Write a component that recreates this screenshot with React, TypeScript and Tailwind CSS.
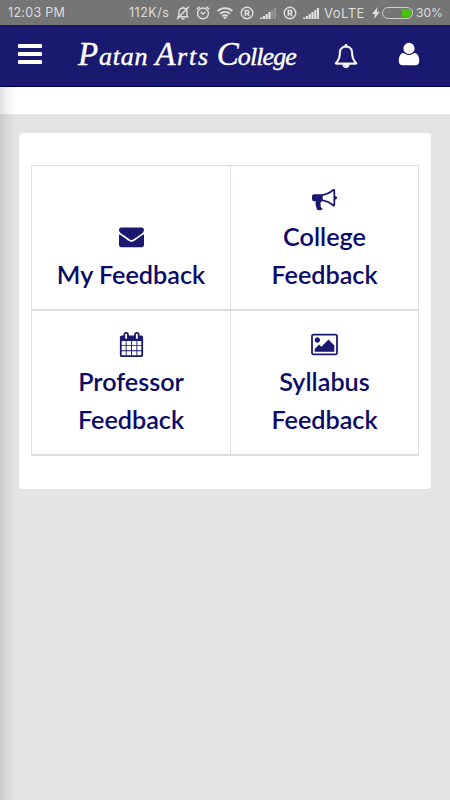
import type { ReactNode } from "react";

type IconProps = {
  path: string;
  viewBox?: string;
  className?: string;
};

function Icon({ path, viewBox = "0 0 1792 1792", className }: IconProps) {
  return (
    <svg viewBox={viewBox} fill="currentColor" className={className}>
      <path d={path} />
    </svg>
  );
}

const bars =
  "M1664 1344v128q0 26-19 45t-45 19h-1408q-26 0-45-19t-19-45v-128q0-26 19-45t45-19h1408q26 0 45 19t19 45zm0-512v128q0 26-19 45t-45 19h-1408q-26 0-45-19t-19-45v-128q0-26 19-45t45-19h1408q26 0 45 19t19 45zm0-512v128q0 26-19 45t-45 19h-1408q-26 0-45-19t-19-45v-128q0-26 19-45t45-19h1408q26 0 45 19t19 45z";
const bell =
  "M912 1696q0-16-16-16-59 0-101.5-42.5t-42.5-101.5q0-16-16-16t-16 16q0 73 51.5 124.5t124.5 51.5q16 0 16-16zm-666-288h1300q-266-300-266-832 0-51-24-105t-69-103-121.5-80.5-169.5-31.5-169.5 31.5-121.5 80.5-69 103-24 105q0 532-266 832zm1482 0q0 52-38 90t-90 38h-448q0 106-75 181t-181 75-181-75-75-181h-448q-52 0-90-38t-38-90q50-42 91-88t85-119.5 74.5-158.5 50-206 19.5-260q0-152 117-282.5t307-158.5q-8-19-8-39 0-40 28-68t68-28 68 28 28 68q0 20-8 39 190 28 307 158.5t117 282.5q0 139 19.5 260t50 206 74.5 158.5 85 119.5 91 88z";
const user =
  "M1600 1405q0 120-73 189.5t-194 69.5h-874q-121 0-194-69.5t-73-189.5q0-53 3.5-103.5t14-109 26.5-108.5 43-97.5 62-81 85.5-53.5 111.5-20q9 0 42 21.5t74.5 48 108 48 133.5 21.5 133.5-21.5 108-48 74.5-48 42-21.5q61 0 111.5 20t85.5 53.5 62 81 43 97.5 26.5 108.5 14 109 3.5 103.5zm-320-893q0 159-112.5 271.5t-271.5 112.5-271.5-112.5-112.5-271.5 112.5-271.5 271.5-112.5 271.5 112.5 112.5 271.5z";
const envelope =
  "M1792 710v794q0 66-47 113t-113 47h-1472q-66 0-113-47t-47-113v-794q44 49 101 87 362 246 497 345 57 42 92.5 65.5t94.5 48 110 24.5h2q51 0 110-24.5t94.5-48 92.5-65.5q170-123 498-345 57-39 100-87zm0-294q0 79-49 151t-122 123q-376 261-468 325-10 7-42.5 31t-54 38.5-52 32.5-57.5 27-50 9h-2q-23 0-50-9t-57.5-27-52-32.5-54-38.5-42.5-31q-91-64-262-182.5t-205-142.5q-62-42-117-115.5t-55-136.5q0-78 41.5-130t118.5-52h1472q65 0 112.5 47t47.5 113z";
const bullhorn =
  "M1664 640q53 0 90.5 37.5t37.5 90.5-37.5 90.5-90.5 37.5v384q0 52-38 90t-90 38q-417-347-812-380-58 19-91 66t-31 100.5 40 92.5q-20 33-23 65.5t6 58 33.5 55 48 50 61.5 50.5q-29 58-111.5 83t-168.5 11.5-132-55.5q-7-23-29.5-87.5t-32-94.5-23-89-15-101 3.5-98.5 22-110.5h-122q-66 0-113-47t-47-113v-192q0-66 47-113t113-47h480q435 0 896-384 52 0 90 38t38 90v384zm-128 604v-954q-394 302-768 343v270q377 42 768 341z";
const calendar =
  "M192 1664h288v-288h-288v288zm352 0h320v-288h-320v288zm-352-352h288v-320h-288v320zm352 0h320v-320h-320v320zm-352-384h288v-288h-288v288zm736 736h320v-288h-320v288zm-384-736h320v-288h-320v288zm768 736h288v-288h-288v288zm-384-352h320v-320h-320v320zm-352-864v-288q0-13-9.5-22.5t-22.5-9.5h-64q-13 0-22.5 9.5t-9.5 22.5v288q0 13 9.5 22.5t22.5 9.5h64q13 0 22.5-9.5t9.5-22.5zm736 864h288v-320h-288v320zm-384-384h320v-288h-320v288zm384 0h288v-288h-288v288zm32-480v-288q0-13-9.5-22.5t-22.5-9.5h-64q-13 0-22.5 9.5t-9.5 22.5v288q0 13 9.5 22.5t22.5 9.5h64q13 0 22.5-9.5t9.5-22.5zm384-64v1280q0 52-38 90t-90 38h-1408q-52 0-90-38t-38-90v-1280q0-52 38-90t90-38h128v-96q0-66 47-113t113-47h64q66 0 113 47t47 113v96h384v-96q0-66 47-113t113-47h64q66 0 113 47t47 113v96h128q52 0 90 38t38 90z";
const picture =
  "M576 576q0 80-56 136t-136 56-136-56-56-136 56-136 136-56 136 56 56 136zm1024 384v448h-1408v-192l320-320 160 160 512-512zm96-704h-1600q-13 0-22.5 9.5t-9.5 22.5v1216q0 13 9.5 22.5t22.5 9.5h1600q13 0 22.5-9.5t9.5-22.5v-1216q0-13-9.5-22.5t-22.5-9.5zm160 32v1216q0 66-47 113t-113 47h-1600q-66 0-113-47t-47-113v-1216q0-66 47-113t113-47h1600q66 0 113 47t47 113z";

function Registered() {
  return (
    <svg viewBox="0 0 14 14" fill="none" stroke="currentColor" className="size-3.5 shrink-0">
      <circle cx="7" cy="7" r="5.8" strokeWidth="1.4" />
      <path d="M5.3 10V4.4h2.1a1.5 1.5 0 0 1 0 3H5.3M7.3 7.5 9 10" strokeWidth="1.5" />
    </svg>
  );
}

function Signal({ weak = false }: { weak?: boolean }) {
  return (
    <svg viewBox="0 0 16 11" fill="currentColor" className="h-[11px] w-4 shrink-0">
      <path d="M0 11V9.5h2.2V11zM2.8 11V8H5v3zM5.6 11V6h2.2v5z" />
      <path d="M8.4 11V4h2.2v7z" />
      <path d="M11.2 11V2h2v9zM13.8 11V0H16v11z" opacity={weak ? 0.3 : 1} />
    </svg>
  );
}

function StatusBar() {
  return (
    <div className="flex h-[25px] items-center bg-[#757575] pl-2 font-['Inter',sans-serif] text-[12px] text-[#dedede]">
      <span className="w-[121px] pt-0.5 text-[12.5px] tracking-[0.3px] whitespace-nowrap">12:03 PM</span>
      <span className="w-[47px] pt-0.5 text-[12.5px] tracking-[0.5px] whitespace-nowrap">112K/s</span>
      <svg viewBox="0 0 14 14" fill="none" stroke="currentColor" strokeWidth="1.4" className="size-3.5 shrink-0">
        <path d="M1.5 10.8h11M3 10.5V5.6C3 3.6 4.6 2 7 2s4 1.6 4 3.6v4.9M7 .5V2M5.5 12.7h3M12.8.8 1 13.2" />
      </svg>
      <svg viewBox="0 0 14 14" fill="none" stroke="currentColor" strokeWidth="1.4" className="ml-1.5 size-3.5 shrink-0">
        <circle cx="7" cy="7.4" r="5.4" />
        <path d="M4.6 6 7 8l2.4-2M.6 3.3 3.6.8M13.4 3.3 10.4.8" />
      </svg>
      <svg viewBox="0 0 16 12" fill="none" stroke="currentColor" strokeWidth="1.8" className="ml-[7px] h-3 w-4 shrink-0">
        <path d="M.6 4.2a10.5 10.5 0 0 1 14.8 0M3 6.9a7 7 0 0 1 10 0M5.3 9.3a3.8 3.8 0 0 1 5.4 0" />
        <circle cx="8" cy="10.8" r=".5" />
      </svg>
      <span className="ml-[7px] flex"><Registered /></span>
      <span className="ml-1.5 flex pt-0.5"><Signal weak /></span>
      <span className="ml-[7px] flex"><Registered /></span>
      <span className="ml-1.5 flex pt-0.5"><Signal /></span>
      <span className="ml-[5px] w-[48px] pt-0.5 text-[13px] tracking-[0.5px] whitespace-nowrap">VoLTE</span>
      <svg viewBox="0 0 8 12" fill="currentColor" className="h-3 w-2 shrink-0">
        <path d="M5.5 0 0 7h3L2 12l6-7.2H4.8z" />
      </svg>
      <span className="ml-0.5 flex h-3 w-[31px] shrink-0 justify-end overflow-hidden rounded-full border border-[#d0d0d0] p-px">
        <span className="w-[9px] rounded-r-full bg-[#45c408]" />
      </span>
      <span className="ml-[3px] whitespace-nowrap">30%</span>
    </div>
  );
}

function Header() {
  return (
    <header className="flex h-[62px] items-center border-b border-[#00005c] bg-[#191970] pb-[3px] text-white">
      <Icon path={bars} viewBox="128 256 1536 1280" className="ml-[18px] h-[20px] w-6 shrink-0" />
      <h1 className="ml-9 flex w-[218px] shrink-0 items-baseline justify-between pt-px font-['Liberation_Serif',serif] text-[26px] leading-none whitespace-nowrap italic [-webkit-text-stroke:0.4px_white]">
        <span className="tracking-[0.8px]"><span className="text-[33px]">P</span>atan </span>
        <span className="tracking-[1.8px]"><span className="text-[33px]">A</span>rts </span>
        <span className="tracking-[-0.9px]"><span className="text-[33px]">C</span>ollege</span>
      </h1>
      <Icon path={bell} className="mt-[3px] ml-[38px] size-6 shrink-0 stroke-current stroke-[30]" />
      <Icon path={user} className="ml-[38px] size-[26px] shrink-0" />
    </header>
  );
}

function Tile({ icon, children, className }: { icon: ReactNode; children: ReactNode; className?: string }) {
  return (
    <div
      className={`flex h-[145px] flex-col items-center justify-end border-b-2 border-[#dbdfe4] pb-4 text-center text-[25.2px] leading-[37.5px] font-semibold text-[#0a0a68] ${className}`}
    >
      <span className="flex h-[37.5px] items-center text-[#191970]">{icon}</span>
      {children}
    </div>
  );
}

function App() {
  return (
    <div className="flex h-[800px] w-[450px] flex-col overflow-hidden bg-[#e4e4e4] font-['Lato',sans-serif]">
      <StatusBar />
      <Header />
      <main className="relative flex-1">
        <div className="h-[27px] bg-white" />
        <section className="mx-[19px] mt-[19px] h-[356px] rounded bg-white pt-8 pl-3">
          <div className="grid w-[388px] grid-cols-[199px_187px] border border-b-0 border-[#dbdfe4]">
            <Tile icon={<Icon path={envelope} className="size-[25px]" />} className="border-r">
              <p>My Feedback</p>
            </Tile>
            <Tile icon={<Icon path={bullhorn} className="size-[25px]" />}>
              <p>College<br />Feedback</p>
            </Tile>
            <Tile icon={<Icon path={calendar} className="size-[25px]" />} className="border-r">
              <p>Professor<br />Feedback</p>
            </Tile>
            <Tile icon={<Icon path={picture} viewBox="-64 0 1920 1792" className="h-[25px] w-[27px]" />}>
              <p>Syllabus<br />Feedback</p>
            </Tile>
          </div>
        </section>
        {/* drawer shadow along the left edge */}
        <div className="absolute inset-y-0 left-0 w-4 bg-linear-to-r from-black/12 via-black/4 to-transparent" />
      </main>
    </div>
  );
}

export default App;
